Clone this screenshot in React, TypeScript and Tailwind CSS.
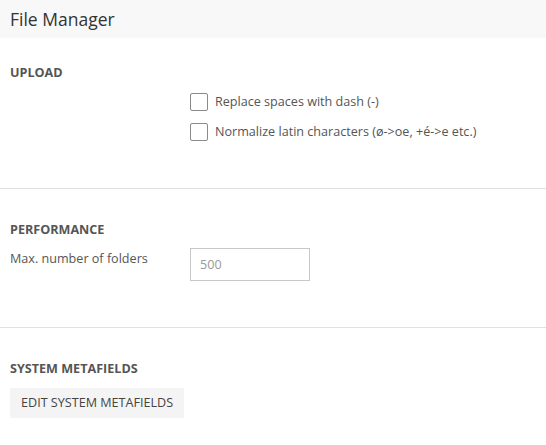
import { useState } from "react";

function Checkbox({ label }: { label: string }) {
  const [checked, setChecked] = useState(false);
  return (
    <label className="flex items-center h-[18px] cursor-pointer">
      <input
        type="checkbox"
        checked={checked}
        onChange={e => setChecked(e.target.checked)}
        className="appearance-none w-[18px] h-[18px] border border-[#8a8a8a] rounded-[2px] bg-white shrink-0"
      />
      <span className="ml-[7px] text-[12.6px] text-[#555]">{label}</span>
    </label>
  );
}

function Heading({ children }: { children: string }) {
  return <h2 className="text-[12.6px] leading-[20px] font-bold text-[#555]">{children}</h2>;
}

export default function App() {
  return (
    <div className="w-[546px] h-[445px] bg-white text-[#555]" style={{ fontFamily: '"Open Sans", "Noto Sans", sans-serif' }}>
      <div className="h-[38px] bg-[#f8f8f8] px-[10px] flex items-center">
        <h1 className="text-[17.5px] text-[#333]">File Manager</h1>
      </div>

      <section className="px-[10px] pt-[25px] pb-[47px] border-b border-[#e1e1e1]">
        <Heading>UPLOAD</Heading>
        <div className="pl-[180px] mt-[10px] flex flex-col gap-[12px]">
          <Checkbox label="Replace spaces with dash (-)" />
          <Checkbox label="Normalize latin characters (ø->oe, +é->e etc.)" />
        </div>
      </section>

      <section className="px-[10px] pt-[31px] pb-[46px] border-b border-[#e1e1e1]">
        <Heading>PERFORMANCE</Heading>
        <div className="mt-[8px] flex">
          <label className="w-[180px] text-[12.6px] text-[#555] pt-[2px]">Max. number of folders</label>
          <input
            type="text"
            placeholder="500"
            className="w-[120px] h-[33px] border border-[#c8c8c8] px-[9px] text-[12.6px] text-[#555] placeholder:text-[#999] outline-none"
          />
        </div>
      </section>

      <section className="px-[10px] pt-[31px]">
        <Heading>SYSTEM METAFIELDS</Heading>
        <button className="mt-[9px] h-[30px] px-[11px] bg-[#f4f4f4] text-[12.6px] text-[#444]">
          EDIT SYSTEM METAFIELDS
        </button>
      </section>
    </div>
  );
}
